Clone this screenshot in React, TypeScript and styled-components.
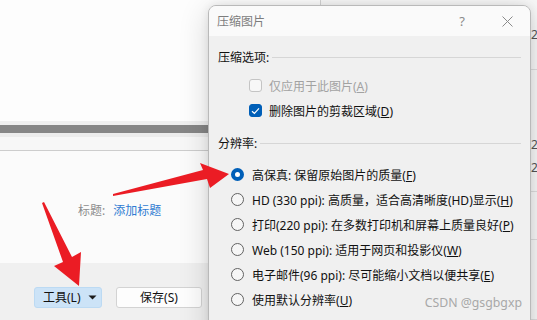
import React from "react";
import styled, { createGlobalStyle } from "styled-components";

const FONT = `"Noto Sans", "Noto Sans CJK SC", sans-serif`;

const Global = createGlobalStyle`
  html, body { margin: 0; padding: 0; }
  body { width: 537px; height: 320px; overflow: hidden; font-family: ${FONT}; font-size: 12px; color: #111; }
  * { box-sizing: border-box; }
`;

const Page = styled.div`
  position: relative;
  width: 537px;
  height: 320px;
  display: grid;
  grid-template-columns: 320px 1fr;
  overflow: hidden;
  background: #fff;
`;

const DocWindow = styled.div`
  display: flex;
  flex-direction: column;
  height: 320px;
  background: #fdfdfd;
`;

const TopArea = styled.div`
  flex: 0 0 121px;
  background: #fdfdfd;
`;

const SplitBar = styled.div`
  flex: 0 0 16px;
  background: #868686;
  border-top: 4px solid #efefef;
  border-bottom: 4px solid #ececec;
`;

const InputStrip = styled.div`
  flex: 0 0 14px;
  background: #f7f7f7;
  border-bottom: 1px solid #cdcdcd;
`;

const Content = styled.div`
  flex: 1;
  background: #fbfbfb;
  padding: 50px 0 0 78px;
`;

const CaptionRow = styled.div`
  display: flex;
  align-items: center;
  gap: 8px;
  height: 20px;
  line-height: 20px;
`;

const CaptionLabel = styled.span`
  color: #8c8c8c;
`;

const CaptionLink = styled.span`
  color: #2f7bd2;
`;

const Footer = styled.div`
  flex: 0 0 57px;
  background: #f0f0f0;
  display: flex;
  align-items: flex-start;
  gap: 14px;
  padding: 24px 0 0 34px;
`;

const Button = styled.div<{ $w: number; $primary?: boolean }>`
  width: ${(p) => p.$w}px;
  height: 21px;
  display: flex;
  align-items: center;
  justify-content: ${(p) => (p.$primary ? "space-between" : "center")};
  padding: ${(p) => (p.$primary ? "0 4px 0 8px" : "0")};
  border-radius: 3px;
  border: 1px solid ${(p) => (p.$primary ? "#bcdaf3" : "#d3d3d3")};
  background: ${(p) => (p.$primary ? "#cce3f7" : "#fdfdfd")};
  color: #111;
  font-size: 12px;
  line-height: 19px;
`;

const SidePane = styled.div`
  background: #f8f8f8;
  border-left: 1px solid #d4d4d4;
  display: flex;
  flex-direction: column;
`;

const SideCell = styled.div<{ $h: number; $pt: number }>`
  height: ${(p) => p.$h}px;
  padding: ${(p) => p.$pt}px 0 0 210px;
  border-bottom: 1px solid #dedede;
  line-height: 23px;
  color: #555;
  font-size: 12px;
`;

const Dialog = styled.div`
  position: absolute;
  left: 208px;
  top: 5px;
  width: 323px;
  height: 340px;
  border: 1px solid #b9b9b9;
  border-radius: 8px;
  background: #f0f0f0;
  box-shadow: 0 6px 30px rgba(0, 0, 0, 0.16), 0 0 8px rgba(0, 0, 0, 0.08);
  overflow: hidden;
  display: flex;
  flex-direction: column;
`;

const TitleBar = styled.div`
  flex: 0 0 30px;
  background: #fafafa;
  display: flex;
  align-items: center;
  padding: 0 0 0 8px;
`;

const Title = styled.div`
  flex: 1;
  color: #7d7d7d;
  font-size: 12px;
`;

const TitleAction = styled.div<{ $w: number }>`
  width: ${(p) => p.$w}px;
  display: flex;
  justify-content: center;
  align-items: center;
  color: #8a8a8a;
  font-size: 13px;
`;

const Body = styled.div`
  flex: 1;
  padding: 11px 9px 0 9px;
  display: flex;
  flex-direction: column;
`;

const SectionHeader = styled.div<{ $mt: number }>`
  display: flex;
  align-items: center;
  height: 20px;
  margin-top: ${(p) => p.$mt}px;
  &::after {
    content: "";
    flex: 1;
    height: 1px;
    background: #d6d6d6;
    margin-left: 3px;
  }
`;

const OptionList = styled.div<{ $mt: number; $indent: number }>`
  display: flex;
  flex-direction: column;
  margin-top: ${(p) => p.$mt}px;
  padding-left: ${(p) => p.$indent}px;
`;

const OptionRow = styled.div<{ $disabled?: boolean; $gap: number }>`
  display: flex;
  align-items: center;
  height: 25px;
  gap: ${(p) => p.$gap}px;
  color: ${(p) => (p.$disabled ? "#a2a2a2" : "#111")};
  white-space: nowrap;
`;

const CheckBox = styled.div<{ $checked?: boolean }>`
  width: 13px;
  height: 13px;
  border-radius: 3px;
  border: 1px solid ${(p) => (p.$checked ? "#005fb8" : "#c4c4c4")};
  background: ${(p) => (p.$checked ? "#005fb8" : "#f7f7f7")};
  display: flex;
  align-items: center;
  justify-content: center;
`;

const Radio = styled.div<{ $checked?: boolean }>`
  width: 13px;
  height: 13px;
  border-radius: 50%;
  border: ${(p) => (p.$checked ? "4px solid #005fb8" : "1px solid #626262")};
  background: ${(p) => (p.$checked ? "#ffffff" : "#f6f6f6")};
`;

const Key = styled.span`
  text-decoration: underline;
  text-underline-offset: 1px;
`;

const Watermark = styled.div`
  position: absolute;
  right: 15px;
  top: 293px;
  color: #a8a8a8;
  font-family: "Noto Sans", sans-serif;
  font-size: 12.3px;
  line-height: 20px;
`;

const Overlay = styled.svg`
  position: absolute;
  left: 0;
  top: 0;
  width: 537px;
  height: 320px;
  pointer-events: none;
`;

const radios: { text: string; key: string; checked?: boolean }[] = [
  { text: "高保真: 保留原始图片的质量", key: "F", checked: true },
  { text: "HD (330 ppi): 高质量，适合高清晰度(HD)显示", key: "H" },
  { text: "打印(220 ppi): 在多数打印机和屏幕上质量良好", key: "P" },
  { text: "Web (150 ppi): 适用于网页和投影仪", key: "W" },
  { text: "电子邮件(96 ppi): 尽可能缩小文档以便共享", key: "E" },
  { text: "使用默认分辨率", key: "U" },
];

export default function App() {
  return (
    <>
      <Global />
      <Page>
        <DocWindow>
          <TopArea />
          <SplitBar />
          <InputStrip />
          <Content>
            <CaptionRow>
              <CaptionLabel>标题:</CaptionLabel>
              <CaptionLink>添加标题</CaptionLink>
            </CaptionRow>
          </Content>
          <Footer>
            <Button $w={68} $primary>
              <span>工具(L)</span>
              <svg width="9" height="5" viewBox="0 0 9 5">
                <path d="M0.5 0.5 L8.5 0.5 L4.5 4.5 Z" fill="#1b1b1b" />
              </svg>
            </Button>
            <Button $w={86}>保存(S)</Button>
          </Footer>
        </DocWindow>
        <SidePane>
          <SideCell $h={70} $pt={23}>2</SideCell>
          <SideCell $h={122} $pt={63}>
            2<br />2
          </SideCell>
          <SideCell $h={48} $pt={0} />
          <SideCell $h={80} $pt={0} />
        </SidePane>

        <Dialog>
          <TitleBar>
            <Title>压缩图片</Title>
            <TitleAction $w={44}>?</TitleAction>
            <TitleAction $w={46}>
              <svg width="11" height="11" viewBox="0 0 11 11">
                <path d="M0.5 0.5 L10.5 10.5 M10.5 0.5 L0.5 10.5" stroke="#8a8a8a" strokeWidth="1" />
              </svg>
            </TitleAction>
          </TitleBar>
          <Body>
            <SectionHeader $mt={0}>压缩选项:</SectionHeader>
            <OptionList $mt={6} $indent={31}>
              <OptionRow $disabled $gap={7}>
                <CheckBox />
                <span>
                  仅应用于此图片(<Key>A</Key>)
                </span>
              </OptionRow>
              <OptionRow $gap={7}>
                <CheckBox $checked>
                  <svg width="9" height="8" viewBox="0 0 9 8">
                    <path d="M1 4.2 L3.4 6.5 L8 1.3" stroke="#fff" strokeWidth="1.2" fill="none" />
                  </svg>
                </CheckBox>
                <span>
                  删除图片的剪裁区域(<Key>D</Key>)
                </span>
              </OptionRow>
            </OptionList>
            <SectionHeader $mt={10}>分辨率:</SectionHeader>
            <OptionList $mt={9} $indent={13}>
              {radios.map((r) => (
                <OptionRow key={r.key} $gap={8}>
                  <Radio $checked={r.checked} />
                  <span>
                    {r.text}(<Key>{r.key}</Key>)
                  </span>
                </OptionRow>
              ))}
            </OptionList>
          </Body>
        </Dialog>

        <Watermark>CSDN @gsgbgxp</Watermark>

        <Overlay viewBox="0 0 537 320">
          <polygon
            points="113,194 203,170 200,163 229,174 210,188 207,179 113,196"
            fill="#eb1c24"
          />
          <polygon
            points="42,203 44,202 72,257 81,252 79,286 54,266 63,262"
            fill="#eb1c24"
          />
        </Overlay>
      </Page>
    </>
  );
}
